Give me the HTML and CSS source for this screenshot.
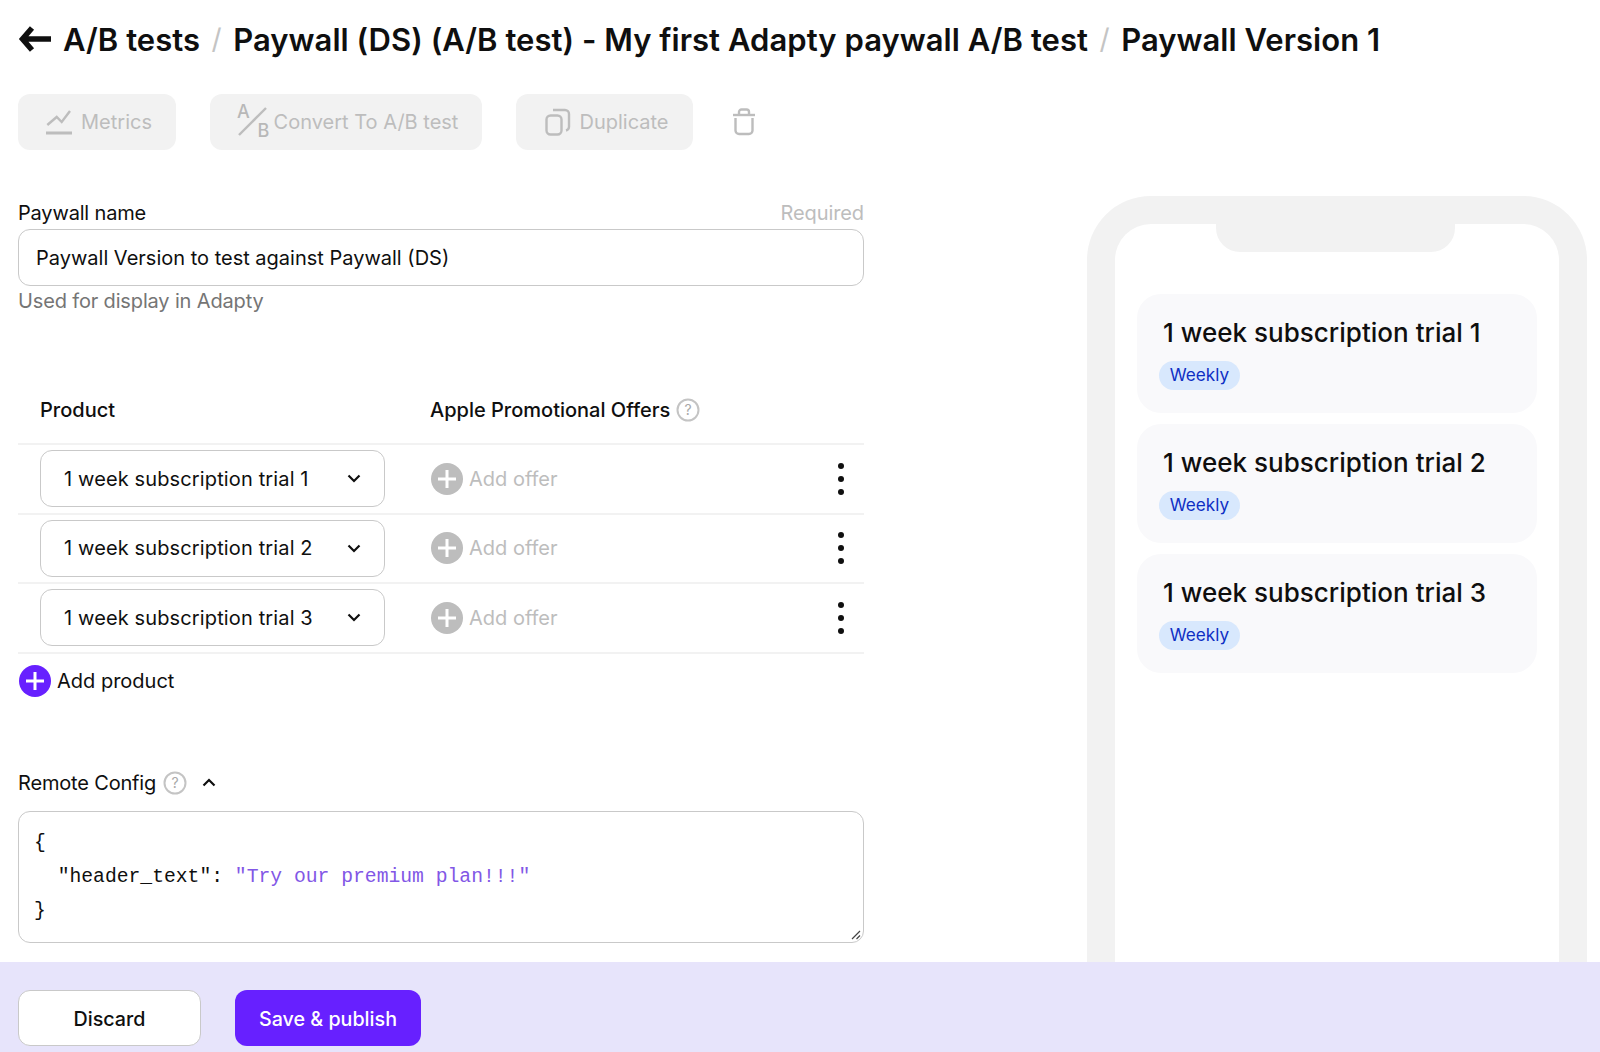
FILE: index.html
```
<!DOCTYPE html>
<html lang="en">
<head>
<meta charset="utf-8">
<title>Paywall Version 1</title>
<link rel="stylesheet" href="styles.css">
</head>
<body>
<div class="page">
  <main class="main">
    <header class="crumbs">
      <svg class="back" viewBox="0 0 33 26" width="33" height="26"><path d="M14 2 4.500 13 14 24M5 13h28" fill="none" stroke="#0f0f0f" stroke-width="5.500"/></svg>
      <span>A/B tests</span><span class="sep">/</span>
      <span>Paywall (DS) (A/B test) - My first Adapty paywall A/B test</span><span class="sep">/</span>
      <span>Paywall Version 1</span>
    </header>
    <div class="content">
      <section class="left">
        <div class="actions">
          <div class="btn-dis btn-metrics">
            <svg viewBox="0 0 26 26" width="26" height="26" fill="none" stroke="#bdbdbd" stroke-width="2.400"><path d="M1.300 16 10.700 8l5 5L24 2"/><path d="M0 24h26" stroke-width="3"/></svg>
            <span>Metrics</span>
          </div>
          <div class="btn-dis btn-convert">
            <svg viewBox="-2 -4 36 42" width="36" height="42" fill="none"><path d="M1 30 28 3" stroke="#bdbdbd" stroke-width="2.400"/><text x="-1" y="13" class="ab">A</text><text x="19.500" y="32" class="ab">B</text></svg>
            <span>Convert To A/B test</span>
          </div>
          <div class="btn-dis btn-dup">
            <svg viewBox="0 0 26 28" width="26" height="28" fill="none" stroke="#bdbdbd" stroke-width="2.400"><rect x="1.500" y="7.500" width="15" height="19" rx="4"/><path d="M8 2h12a4 4 0 0 1 4 4v13a4 4 0 0 1-3 3.500"/></svg>
            <span>Duplicate</span>
          </div>
          <svg class="trash" viewBox="0 0 24 28" width="24" height="28" fill="none" stroke="#bdbdbd" stroke-width="2.400"><path d="M1 7h22"/><path d="M7 6V4a2.500 2.500 0 0 1 2.500-2.500h5A2.500 2.500 0 0 1 17 4v2"/><path d="M3.500 10v12.500a3.500 3.500 0 0 0 3.500 3.500h10a3.500 3.500 0 0 0 3.500-3.500V10"/></svg>
        </div>

        <div class="field-head"><span class="label">Paywall name</span><span class="req">Required</span></div>
        <div class="input">Paywall Version to test against Paywall (DS)</div>
        <div class="hint">Used for display in Adapty</div>

        <div class="table">
          <div class="thead">
            <div class="col-a">Product</div>
            <div class="col-b">Apple Promotional Offers
              <svg class="help" viewBox="0 0 24 24" width="24" height="24"><circle cx="12" cy="12" r="10.500" fill="none" stroke="#c4c4c4" stroke-width="2"/><text x="12" y="17" class="qm">?</text></svg>
            </div>
          </div>
          <div class="row">
            <div class="select"><span>1 week subscription trial 1</span><svg viewBox="0 0 14 9" width="14" height="9"><path d="M1.500 1.500 7 7l5.500-5.500" fill="none" stroke="#0f0f0f" stroke-width="2.200"/></svg></div>
            <div class="offer"><svg viewBox="0 0 32 32" width="32" height="32"><circle cx="16" cy="16" r="16" fill="#bdbdbd"/><path d="M16 7v18M7 16h18" stroke="#fff" stroke-width="3"/></svg><span>Add offer</span></div>
            <div class="more"><i></i><i></i><i></i></div>
          </div>
          <div class="row">
            <div class="select"><span>1 week subscription trial 2</span><svg viewBox="0 0 14 9" width="14" height="9"><path d="M1.500 1.500 7 7l5.500-5.500" fill="none" stroke="#0f0f0f" stroke-width="2.200"/></svg></div>
            <div class="offer"><svg viewBox="0 0 32 32" width="32" height="32"><circle cx="16" cy="16" r="16" fill="#bdbdbd"/><path d="M16 7v18M7 16h18" stroke="#fff" stroke-width="3"/></svg><span>Add offer</span></div>
            <div class="more"><i></i><i></i><i></i></div>
          </div>
          <div class="row">
            <div class="select"><span>1 week subscription trial 3</span><svg viewBox="0 0 14 9" width="14" height="9"><path d="M1.500 1.500 7 7l5.500-5.500" fill="none" stroke="#0f0f0f" stroke-width="2.200"/></svg></div>
            <div class="offer"><svg viewBox="0 0 32 32" width="32" height="32"><circle cx="16" cy="16" r="16" fill="#bdbdbd"/><path d="M16 7v18M7 16h18" stroke="#fff" stroke-width="3"/></svg><span>Add offer</span></div>
            <div class="more"><i></i><i></i><i></i></div>
          </div>
        </div>
        <div class="add-product"><svg viewBox="0 0 32 32" width="32" height="32"><circle cx="16" cy="16" r="16" fill="#6720ff"/><path d="M16 7v18M7 16h18" stroke="#fff" stroke-width="3"/></svg><span>Add product</span></div>

        <div class="rc-head"><span class="label">Remote Config</span>
          <svg class="help" viewBox="0 0 24 24" width="24" height="24"><circle cx="12" cy="12" r="10.500" fill="none" stroke="#c4c4c4" stroke-width="2"/><text x="12" y="17" class="qm">?</text></svg>
          <svg class="caret" viewBox="0 0 14 9" width="14" height="9"><path d="M1.500 7.500 7 2l5.500 5.500" fill="none" stroke="#0f0f0f" stroke-width="2.200"/></svg>
        </div>
        <div class="code">
<pre>{
  "header_text": <b>"Try our premium plan!!!"</b>
}</pre>
          <svg class="grip" viewBox="0 0 10 10" width="10" height="10"><path d="M1 9 9 1M5.500 9 9 5.500" stroke="#444" stroke-width="1.200"/></svg>
        </div>
      </section>
      <aside class="phone">
        <div class="notch"></div>
        <div class="card"><div class="card-title">1 week subscription trial 1</div><span class="badge">Weekly</span></div>
        <div class="card"><div class="card-title">1 week subscription trial 2</div><span class="badge">Weekly</span></div>
        <div class="card"><div class="card-title">1 week subscription trial 3</div><span class="badge">Weekly</span></div>
      </aside>
    </div>
  </main>
  <footer class="footer">
    <div class="btn-discard">Discard</div>
    <div class="btn-save">Save &amp; publish</div>
  </footer>
</div>
</body>
</html>
```
FILE: styles.css
```
* { box-sizing: border-box; }
html, body { margin: 0; height: 100%; background: #fff; }
body { font-family: Inter, "Liberation Sans", sans-serif; color: #0f0f0f; font-size: 20px; }
.page { width: 1600px; height: 1052px; display: flex; flex-direction: column; overflow: hidden; }
.main { flex: 1; min-height: 0; overflow: hidden; padding: 0 0 0 18px; }
.crumbs { height: 78px; display: flex; align-items: center; font-size: 31px; font-weight: 600; white-space: nowrap; letter-spacing: 0.040px; }
.back { margin-right: 12px; flex: none; }
.sep { color: #c4c4c4; font-weight: 400; font-size: 28px; margin: 0 11.500px; }
.content { display: flex; align-items: flex-start; }
.left { width: 846px; flex: none; padding-top: 16px; }
.actions { display: flex; align-items: center; height: 56px; }
.btn-dis { height: 56px; background: #f2f2f2; border-radius: 12px; display: flex; align-items: center; justify-content: center; color: #bdbdbd; font-weight: 400; }
.btn-metrics { width: 158px; gap: 9px; padding-left: 4px; }
.btn-convert { width: 272px; margin-left: 34px; gap: 2px; overflow: hidden; padding-left: 2px; }
.btn-dup { width: 177px; margin-left: 34px; gap: 8px; padding-left: 5px; }
.ab { font: 500 18px Inter, sans-serif; fill: #b8b8b8; }
.trash { margin-left: 39px; }
.field-head { display: flex; justify-content: space-between; margin-top: 47px; height: 32px; line-height: 32px; }
.label { letter-spacing: -0.170px; }
.req { color: #bdbdbd; letter-spacing: -0.100px; }
.input { height: 57px; border: 1.500px solid #c9c9c9; border-radius: 12px; display: flex; align-items: center; padding-left: 17px; }
.hint { color: #757575; line-height: 30px; height: 32px; letter-spacing: -0.150px; }
.table { margin-top: 61px; }
.thead { height: 66px; display: flex; align-items: center; font-weight: 500; border-bottom: 2px solid #f2f2f2; padding-left: 22px; padding-bottom: 2px; }
.col-a { width: 390px; }
.col-b { display: flex; align-items: center; gap: 6px; }
.qm { font: 400 14px Inter, sans-serif; fill: #a8a8a8; text-anchor: middle; }
.row { height: 69.500px; display: flex; align-items: center; border-bottom: 2px solid #f2f2f2; padding-left: 22px; }
.select { width: 345px; height: 57px; border: 1.500px solid #c9c9c9; border-radius: 12px; display: flex; align-items: center; justify-content: space-between; padding: 0 23px; letter-spacing: 0.130px; }
.offer { margin-left: 46px; display: flex; align-items: center; gap: 6px; color: #bdbdbd; }
.more { margin-left: auto; margin-right: 20px; display: flex; flex-direction: column; gap: 7px; }
.more i { width: 6px; height: 6px; border-radius: 50%; background: #0f0f0f; display: block; }
.add-product { display: flex; align-items: center; gap: 6px; margin-top: 11px; height: 32px; padding-left: 1px; }
.rc-head { display: flex; align-items: center; margin-top: 70px; height: 32px; gap: 7px; }
.caret { margin-left: 8px; }
.code { position: relative; margin-top: 12px; height: 132px; border: 1.500px solid #c9c9c9; border-radius: 12px; padding: 14px 15px; }
.code pre { margin: 0; font: 400 19.700px/34px "Liberation Mono", "DejaVu Sans Mono", monospace; }
.code b { font-weight: 400; color: #8257e6; }
.grip { position: absolute; right: 2px; bottom: 2px; }
.phone { margin: 118px 0 0 223px; width: 500px; height: 900px; flex: none; border: solid #f2f2f2; border-width: 28px 28px 0; border-radius: 64px 64px 0 0; position: relative; padding: 70px 22px 0; display: flex; flex-direction: column; gap: 11.500px; }
.notch { position: absolute; top: 0; left: 101px; width: 239px; height: 28px; background: #f2f2f2; border-radius: 0 0 24px 24px; }
.card { height: 118.500px; background: #f9f9fb; border-radius: 24px; padding: 20px 22px 0; }
.card-title { font-size: 26px; font-weight: 500; line-height: 38px; margin-left: 4px; white-space: nowrap; letter-spacing: 0.020px; }
.badge { display: inline-block; margin-top: 9px; height: 29px; width: 81px; text-align: center; line-height: 28px; border-radius: 15px; background: #d8e8fd; color: #0f2fc4; font-size: 17.200px; }
.footer { height: 90px; flex: none; background: #e7e4fb; display: flex; align-items: flex-start; padding: 28px 0 0 18px; gap: 34px; font-weight: 500; font-size: 19.700px; }
.btn-discard { width: 183px; height: 56px; background: #fff; border: 1.500px solid #c9c9c9; border-radius: 12px; display: flex; align-items: center; justify-content: center; padding-top: 1px; }
.btn-save { width: 186px; height: 56px; background: #6720ff; color: #fff; border-radius: 12px; display: flex; align-items: center; justify-content: center; padding-top: 1px; }
```
